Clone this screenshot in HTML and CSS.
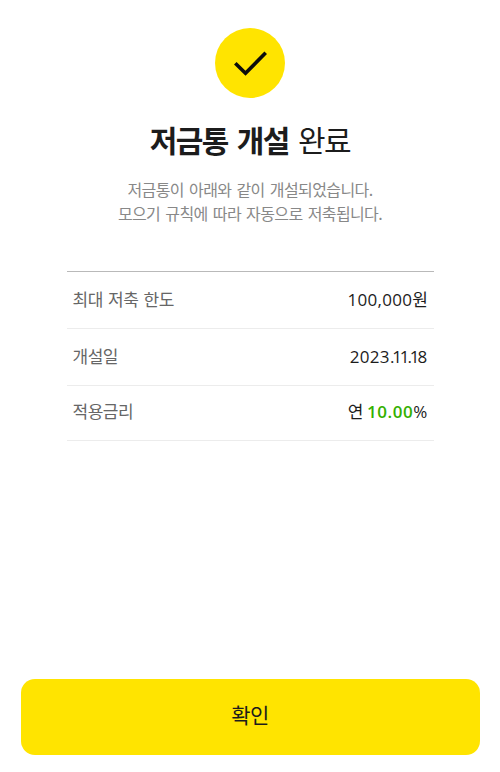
FILE: index.html
```html
<!DOCTYPE html>
<html lang="ko">
<head>
<meta charset="utf-8">
<title>저금통 개설 완료</title>
<link rel="stylesheet" href="styles.css">
</head>
<body>
<main class="page">
  <div class="badge">
    <svg class="check" viewBox="0 0 70 70" aria-hidden="true"><path d="M20.3 35.2 30.5 45.3 50.7 24.8"/></svg>
  </div>
  <h1 class="title"><b>저금통 개설</b> 완료</h1>
  <p class="desc">저금통이 아래와 같이 개설되었습니다.<br>모으기 규칙에 따라 자동으로 저축됩니다.</p>
  <dl class="list">
    <div class="row limit"><dt>최대 저축 한도</dt><dd><span class="num">100,000</span>원</dd></div>
    <div class="row date"><dt>개설일</dt><dd><span class="num">2023<span class="tight">.11.1</span>8</span></dd></div>
    <div class="row rate"><dt>적용금리</dt><dd>연 <span class="num"><b>10.00</b>%</span></dd></div>
  </dl>
  <button class="confirm" type="button">확인</button>
</main>
</body>
</html>
```
FILE: styles.css
```css
* { box-sizing: border-box; }
body { margin: 0; background: #fff; font-family: "Noto Sans CJK KR", sans-serif; color: #1c1c1c; }
.page { height: 772px; padding: 28px 20px 17px; display: flex; flex-direction: column; align-items: center; }
.badge { width: 70px; height: 70px; border-radius: 50%; background: #ffe400; }
.check { display: block; width: 70px; height: 70px; fill: none; stroke: #0c0c0c; stroke-width: 3.6; }
.title { margin: 19px 0 0; height: 44px; font-size: 30px; line-height: 44px; font-weight: 400; letter-spacing: -1.5px; word-spacing: 2.2px; white-space: nowrap; }
.title b { font-weight: 700; letter-spacing: -1.6px; }
.desc { margin: 16px 0 0; font-size: 16px; line-height: 24px; letter-spacing: -.6px; word-spacing: 1.2px; color: #888; text-align: center; white-space: nowrap; }
.list { width: 367px; margin: 46px 0 0; border-top: 1px solid #b9b9b9; }
.row { display: flex; justify-content: space-between; align-items: center; padding: 0 6px 4px; border-bottom: 1px solid #ececec; font-size: 17px; line-height: 25px; letter-spacing: -.5px; }
.limit, .date { height: 57px; }
.rate { height: 55px; padding-bottom: 6px; }
dt { color: #666; word-spacing: 1px; }
dd { margin: 0; }
.num { font-family: "Open Sans", sans-serif; line-height: 1; letter-spacing: .3px; }
.tight { letter-spacing: -2.1px; }
.num b { color: #34b000; font-weight: 600; letter-spacing: .5px; }
.confirm { width: 459px; height: 76px; margin: auto 0 0 1px; padding: 0 1px 7px 0; border: 0; border-radius: 14px; background: #ffe400; font: 400 21px "Noto Sans CJK KR", sans-serif; letter-spacing: -.5px; color: #1c1c1c; }
```
